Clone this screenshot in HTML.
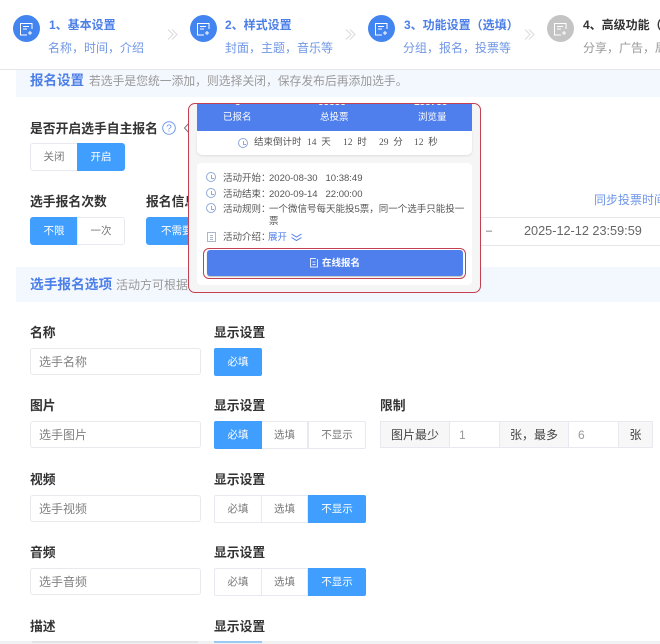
<!DOCTYPE html>
<html lang="zh">
<head>
<meta charset="utf-8">
<style>
html,body{margin:0;padding:0;background:#fff}
body{position:relative;width:660px;height:644px;overflow:hidden;font-family:"Liberation Sans","Noto Sans CJK SC",sans-serif;color:#333}
.a{position:absolute;white-space:nowrap}
.circle{position:absolute;width:27px;height:27px;border-radius:50%;background:#4285f0;top:15px}
.circle svg{position:absolute;left:6px;top:6px}
.t{position:absolute;top:16px;line-height:19px;font-size:12px;font-weight:700;color:#4c7fe8;white-space:nowrap}
.s{position:absolute;top:39px;line-height:19px;font-size:12px;color:#7097e6;white-space:nowrap}
.chev{position:absolute;top:29px}
.lb{position:absolute;font-size:12.8px;font-weight:700;color:#333;line-height:20px;white-space:nowrap}
.btn{position:absolute;font-size:10.5px;text-align:center;background:#fff;color:#777;border:1px solid #e8e9ee;height:26px;line-height:27px;white-space:nowrap;overflow:hidden}
.on{background:#409eff;color:#fff;border-color:#409eff}
.ipt{position:absolute;left:30px;width:169px;height:25px;line-height:26px;border:1px solid #e8e9ec;border-radius:3px;font-size:12px;color:#808080;text-indent:8px;background:#fff}
.cell{position:absolute;top:421px;height:25px;line-height:26px;border:1px solid #e8e9ee;font-size:12px;text-align:center;background:#f7f7f7;color:#444;white-space:nowrap}
.w{background:#fff;color:#999;text-align:left;text-indent:9px}
.pt{position:absolute;font-size:9.5px;color:#555;line-height:14px;white-space:nowrap}
.ico{position:absolute;width:8px;height:8px;border:1px solid #8fa9d8;border-radius:50%}
.ico:after{content:"";position:absolute;left:3.5px;top:1.5px;width:2px;height:3px;border-left:1px solid #8fa9d8;border-bottom:1px solid #8fa9d8}
</style>
</head>
<body>
<!-- header -->
<div class="a" style="left:0;top:69px;width:660px;height:1px;background:#e4e6ea"></div>

<div class="circle" style="left:13px"><svg width="15" height="15" viewBox="0 0 15 15" fill="none" stroke="#fff" stroke-width="1"><path d="M13 8V2.500H1.500V14H8M4 5.500h6M4 8h4M11 10v4M9 12h4"/></svg></div>
<div class="t" style="left:49px">1、基本设置</div>
<div class="s" style="left:48px">名称，时间，介绍</div>
<svg class="chev" style="left:167px" width="11" height="11" viewBox="0 0 11 11" fill="none" stroke="#dcdcdc" stroke-width="1.100"><path d="M1 .5l5 5-5 5M5 .5l5 5-5 5"/></svg>

<div class="circle" style="left:190px"><svg width="15" height="15" viewBox="0 0 15 15" fill="none" stroke="#fff" stroke-width="1"><path d="M13 8V2.500H1.500V14H8M4 5.500h6M4 8h4M11 10v4M9 12h4"/></svg></div>
<div class="t" style="left:225px">2、样式设置</div>
<div class="s" style="left:225px">封面，主题，音乐等</div>
<svg class="chev" style="left:345px" width="11" height="11" viewBox="0 0 11 11" fill="none" stroke="#dcdcdc" stroke-width="1.100"><path d="M1 .5l5 5-5 5M5 .5l5 5-5 5"/></svg>

<div class="circle" style="left:368px"><svg width="15" height="15" viewBox="0 0 15 15" fill="none" stroke="#fff" stroke-width="1"><path d="M13 8V2.500H1.500V14H8M4 5.500h6M4 8h4M11 10v4M9 12h4"/></svg></div>
<div class="t" style="left:404px">3、功能设置（选填）</div>
<div class="s" style="left:403px">分组，报名，投票等</div>
<svg class="chev" style="left:524px" width="11" height="11" viewBox="0 0 11 11" fill="none" stroke="#dcdcdc" stroke-width="1.100"><path d="M1 .5l5 5-5 5M5 .5l5 5-5 5"/></svg>

<div class="circle" style="left:547px;background:#c4c4c4"><svg width="15" height="15" viewBox="0 0 15 15" fill="none" stroke="#fff" stroke-width="1"><path d="M13 8V2.500H1.500V14H8M4 5.500h6M4 8h4M11 10v4M9 12h4"/></svg></div>
<div class="t" style="left:583px;color:#333;width:77px;overflow:hidden">4、高级功能（选填）</div>
<div class="s" style="left:583px;color:#999;width:77px;overflow:hidden">分享，广告，局部设置</div>

<!-- section 1 -->
<div class="a" style="left:16px;top:70px;width:644px;height:27px;background:#f3f7fe"></div>
<div class="a" style="left:30px;top:70px;line-height:21px;font-size:13.500px;font-weight:700;color:#4c7fe8">报名设置</div>
<div class="a" style="left:89px;top:71px;line-height:20px;font-size:11.800px;color:#9a9a9a">若选手是您统一添加，则选择关闭，保存发布后再添加选手。</div>

<div class="lb" style="left:30px;top:119px">是否开启选手自主报名</div>
<svg class="a" style="left:162px;top:121px" width="15" height="15" viewBox="0 0 15 15"><circle cx="7" cy="7" r="6.300" fill="none" stroke="#6f9be8" stroke-width="1"/><text x="7" y="10.500" text-anchor="middle" font-size="10" fill="#6f9be8" font-family="Liberation Sans">?</text></svg>

<div class="btn" style="left:30px;top:143px;width:46px;border-radius:3px 0 0 3px">关闭</div>
<div class="btn on" style="left:77px;top:143px;width:46px;border-radius:0 3px 3px 0">开启</div>

<div class="lb" style="left:30px;top:192px">选手报名次数</div>
<div class="btn on" style="left:30px;top:217px;width:46px;border-radius:3px 0 0 3px">不限</div>
<div class="btn" style="left:77px;top:217px;width:46px;border-radius:0 3px 3px 0">一次</div>

<div class="lb" style="left:146px;top:192px">报名信息审核</div>
<div class="btn on" style="left:146px;top:217px;width:60px;border-radius:3px 0 0 3px;text-align:left;text-indent:14px">不需要审核</div>

<div class="a" style="left:594px;top:191px;width:66px;overflow:hidden;line-height:19px;font-size:12px;color:#6f95e8">同步投票时间</div>
<div class="a" style="left:470px;top:217px;width:190px;height:29px;border-top:1px solid #e4e6ea;border-bottom:1px solid #e4e6ea;box-sizing:border-box"></div>
<div class="a" style="left:486px;top:222px;line-height:18px;font-size:11px;color:#666">–</div>
<div class="a" style="left:524px;top:222px;line-height:18px;font-size:12.700px;color:#666">2025-12-12 23:59:59</div>

<!-- section 2 -->
<div class="a" style="left:16px;top:267px;width:644px;height:35px;background:#f3f7fe"></div>
<div class="a" style="left:30px;top:275px;line-height:20px;font-size:13.700px;font-weight:700;color:#4c7fe8">选手报名选项</div>
<div class="a" style="left:116px;top:275px;line-height:20px;font-size:12px;color:#9a9a9a">活动方可根据需求设置</div>

<!-- rows -->
<div class="lb" style="left:30px;top:323px">名称</div>
<div class="lb" style="left:214px;top:323px">显示设置</div>
<div class="ipt" style="top:348px">选手名称</div>
<div class="btn on" style="left:214px;top:348px;width:46px;border-radius:2px">必填</div>

<div class="lb" style="left:30px;top:396px">图片</div>
<div class="lb" style="left:214px;top:396px">显示设置</div>
<div class="ipt" style="top:421px">选手图片</div>
<div class="btn on" style="left:214px;top:421px;width:46px;border-radius:2px 0 0 2px">必填</div>
<div class="btn" style="left:262px;top:421px;width:45px;border-left:0">选填</div>
<div class="btn" style="left:308px;top:421px;width:56px;border-radius:0 2px 2px 0">不显示</div>

<div class="lb" style="left:380px;top:396px">限制</div>
<div class="cell" style="left:380px;width:68px">图片最少</div>
<div class="cell w" style="left:450px;width:49px;border-left:0">1</div>
<div class="cell" style="left:500px;width:68px;border-left:0">张，最多</div>
<div class="cell w" style="left:569px;width:49px;border-left:0">6</div>
<div class="cell" style="left:619px;width:33px;border-left:0">张</div>

<div class="lb" style="left:30px;top:470px">视频</div>
<div class="lb" style="left:214px;top:470px">显示设置</div>
<div class="ipt" style="top:495px">选手视频</div>
<div class="btn" style="left:214px;top:495px;width:46px;border-radius:2px 0 0 2px">必填</div>
<div class="btn" style="left:262px;top:495px;width:45px;border-left:0">选填</div>
<div class="btn on" style="left:308px;top:495px;width:56px;border-radius:0 2px 2px 0">不显示</div>

<div class="lb" style="left:30px;top:543px">音频</div>
<div class="lb" style="left:214px;top:543px">显示设置</div>
<div class="ipt" style="top:568px">选手音频</div>
<div class="btn" style="left:214px;top:568px;width:46px;border-radius:2px 0 0 2px">必填</div>
<div class="btn" style="left:262px;top:568px;width:45px;border-left:0">选填</div>
<div class="btn on" style="left:308px;top:568px;width:56px;border-radius:0 2px 2px 0">不显示</div>

<div class="lb" style="left:30px;top:617px">描述</div>
<div class="lb" style="left:214px;top:617px">显示设置</div>
<div class="a" style="left:0;top:641px;width:660px;height:3px;background:#f0f1f2"></div>
<div class="a" style="left:32px;top:641px;width:166px;height:2px;background:#e2e4e7"></div>
<div class="a" style="left:214px;top:641px;width:48px;height:2px;background:#9cc8f2"></div>

<!-- popup -->
<svg class="a" style="left:182px;top:120px" width="9" height="16" viewBox="0 0 9 16"><path d="M8 2L2.500 8 8 14" fill="#fff" stroke="#777" stroke-width="1"/><rect x="7" y="3" width="2" height="10" fill="#f7f5f5"/></svg>
<div class="a" style="left:188px;top:103px;width:293px;height:190px;box-sizing:border-box;border:1px solid #c2404f;border-radius:7px;background:#f6f5f5;overflow:hidden">
  <div class="a" style="left:8px;top:0;width:275px;height:27px;background:#4f7fec"></div>
  <div class="a" style="left:8px;top:-7px;width:275px;line-height:11px;font-size:10px;color:#fff;font-weight:700">
    <span class="a" style="left:38px;top:0">8</span><span class="a" style="left:121px;top:0">88888</span><span class="a" style="left:217px;top:0">188788</span>
  </div>
  <div class="a" style="left:34px;top:7px;line-height:14px;font-size:9.500px;color:#fff">已报名</div>
  <div class="a" style="left:131px;top:7px;line-height:14px;font-size:9.500px;color:#fff">总投票</div>
  <div class="a" style="left:229px;top:7px;line-height:14px;font-size:9.500px;color:#fff">浏览量</div>

  <div class="a" style="left:8px;top:27px;width:275px;height:24px;background:#fff;border-radius:0 0 5px 5px;box-shadow:0 1px 2px rgba(0,0,0,.1)"></div>
  <span class="ico" style="left:49px;top:34px"></span>
  <div class="pt" style="left:65px;top:32px">结束倒计时</div>
  <div class="pt" style="left:118px;top:32px;font-family:'Liberation Serif','Noto Sans CJK SC',serif">14&nbsp;&nbsp;天</div>
  <div class="pt" style="left:154px;top:32px;font-family:'Liberation Serif','Noto Sans CJK SC',serif">12&nbsp;&nbsp;时</div>
  <div class="pt" style="left:190px;top:32px;font-family:'Liberation Serif','Noto Sans CJK SC',serif">29&nbsp;&nbsp;分</div>
  <div class="pt" style="left:225px;top:32px;font-family:'Liberation Serif','Noto Sans CJK SC',serif">12&nbsp;&nbsp;秒</div>

  <div class="a" style="left:8px;top:59px;width:275px;height:122px;background:#fff;border-radius:4px"></div>
  <span class="ico" style="left:17px;top:68px"></span>
  <div class="pt" style="left:34px;top:68px">活动开始：</div>
  <div class="pt" style="left:80px;top:68px">2020-08-30&nbsp;&nbsp;&nbsp;10:38:49</div>
  <span class="ico" style="left:17px;top:84px"></span>
  <div class="pt" style="left:34px;top:84px">活动结束：</div>
  <div class="pt" style="left:80px;top:84px">2020-09-14&nbsp;&nbsp;&nbsp;22:00:00</div>
  <span class="ico" style="left:17px;top:99px"></span>
  <div class="pt" style="left:34px;top:99px">活动规则：</div>
  <div class="pt" style="left:80px;top:99px">一个微信号每天能投5票，同一个选手只能投一</div>
  <div class="pt" style="left:80px;top:111px">票</div>
  <svg class="a" style="left:18px;top:128px" width="9" height="10" viewBox="0 0 9 10" fill="none" stroke="#a9b6cc"><rect x=".5" y=".5" width="8" height="9"/><path d="M3 3.500h3M3 5.500h3M3 7.500h3"/></svg>
  <div class="pt" style="left:34px;top:127px">活动介绍：</div>
  <div class="pt" style="left:79px;top:127px;color:#4f7fec">展开</div>
  <svg class="a" style="left:102px;top:129px" width="11" height="9" viewBox="0 0 11 9" fill="none" stroke="#4f7fec"><path d="M.5 1l5 3 5-3M.5 4.500l5 3 5-3"/></svg>

  <div class="a" style="left:14px;top:144px;width:263px;height:31px;box-sizing:border-box;border:1px solid #c2404f;border-radius:6px;background:#fff"></div>
  <div class="a" style="left:18px;top:146px;width:256px;height:26px;background:#4f7fec;border-radius:3px;box-shadow:0 1px 1px rgba(0,0,0,.25)"></div>
  <svg class="a" style="left:121px;top:153px" width="9" height="11" viewBox="0 0 9 11" fill="none" stroke="#dfe7fb"><path d="M7.500 2v8h-7V1.500h5.500M2.500 5h3M2.500 7.500h3"/></svg>
  <div class="a" style="left:133px;top:153px;line-height:14px;font-size:9.500px;color:#fff;font-weight:700">在线报名</div>
</div>
</body>
</html>
